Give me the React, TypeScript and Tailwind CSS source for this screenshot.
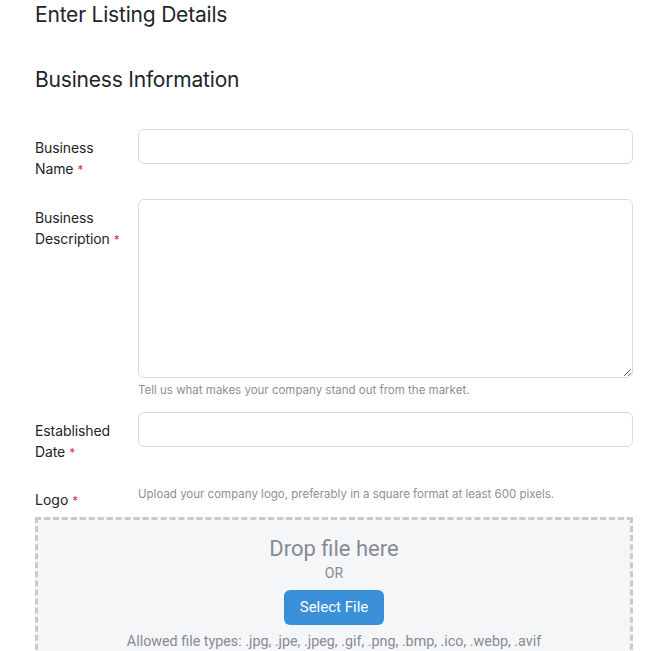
import React from "react";

function Label({ lines }: { lines: string[] }) {
  return (
    <div className="pt-[8px] text-[14px] leading-[21px] tracking-[-0.1px] text-[#212529]">
      {lines.map((l, i) => (
        <div key={i}>
          {l}
          {i === lines.length - 1 && <span className="ml-1 text-[12px] text-[#dc3545]">*</span>}
        </div>
      ))}
    </div>
  );
}

export default function App() {
  return (
    <div
      className="h-screen overflow-hidden bg-white pl-[35px] pr-[33px] text-[#212529]"
      style={{ fontFamily: "Inter, 'Noto Sans', sans-serif" }}
    >
      <h1 className="pt-[1px] text-[21px] leading-[28px] font-normal tracking-[-0.2px]">Enter Listing Details</h1>
      <h2 className="mt-[36px] text-[21px] leading-[30px] font-normal tracking-[-0.2px]">Business Information</h2>

      <div className="mt-[34px] grid grid-cols-[103px_1fr] items-start">
        <Label lines={["Business", "Name"]} />
        <input className="h-[35px] w-full rounded-[6px] border border-[#d9dbde] bg-white" />
      </div>

      <div className="mt-[19px] grid grid-cols-[103px_1fr] items-start">
        <Label lines={["Business", "Description"]} />
        <div>
          <textarea className="block h-[179px] w-full rounded-[6px] border border-[#d9dbde] bg-white" />
          <p className="mt-[4px] text-[11.5px] leading-[16px] text-[#8c9099]">
            Tell us what makes your company stand out from the market.
          </p>
        </div>
      </div>

      <div className="mt-[14px] grid grid-cols-[103px_1fr] items-start">
        <Label lines={["Established", "Date"]} />
        <input className="h-[35px] w-full rounded-[6px] border border-[#d9dbde] bg-white" />
      </div>

      <div className="mt-[18px] grid grid-cols-[103px_1fr] items-start">
        <div className="pt-[8px] text-[14px] leading-[21px]">
          Logo<span className="ml-1 text-[12px] text-[#dc3545]">*</span>
        </div>
        <p className="pt-[5px] text-[11.5px] leading-[16px] text-[#8c9099]">
          Upload your company logo, preferably in a square format at least 600 pixels.
        </p>
      </div>

      <div
        className="mt-[6px] flex h-[160px] flex-col items-center border-[3px] border-dashed border-[#c9cacd] bg-[#f5f6f8] pt-[15px] text-[#878a95]"
        style={{ fontFamily: "Roboto, 'Noto Sans', sans-serif" }}
      >
        <div className="text-[22px] leading-[28px]">Drop file here</div>
        <div className="mt-[1px] text-[14px] leading-[18px]">OR</div>
        <button className="mt-[8px] h-[35px] rounded-[6px] bg-[#3a8fd9] px-[16px] text-[15px] text-white">
          Select File
        </button>
        <div className="mt-[7px] text-[14.3px] leading-[18px]">
          Allowed file types: .jpg, .jpe, .jpeg, .gif, .png, .bmp, .ico, .webp, .avif
        </div>
      </div>
    </div>
  );
}
